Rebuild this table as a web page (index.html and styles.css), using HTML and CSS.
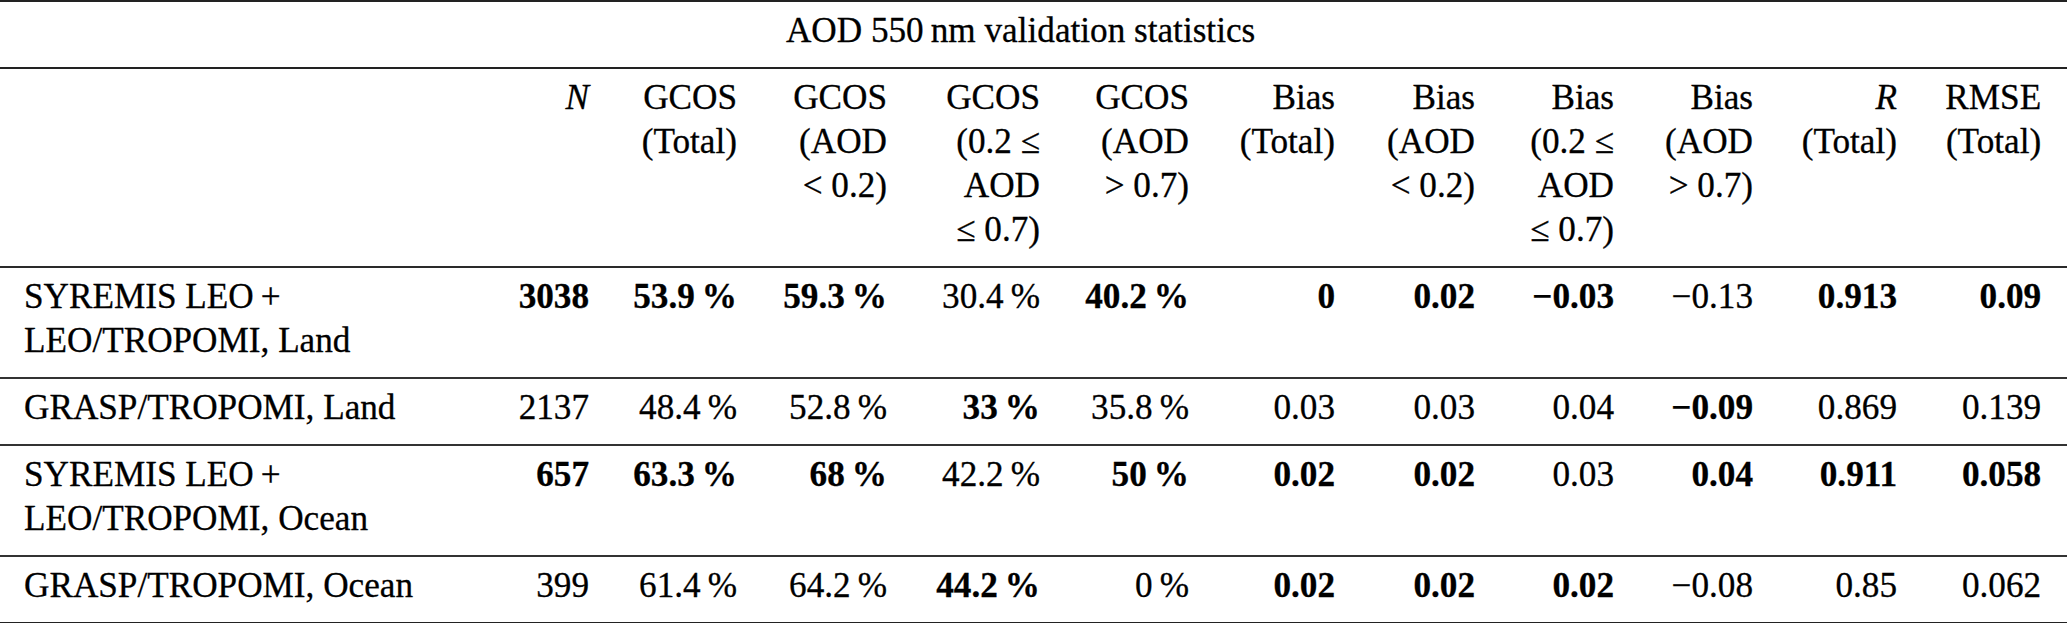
FILE: index.html
```html
<!DOCTYPE html>
<html lang="en">
<head>
<meta charset="utf-8">
<title>AOD 550 nm validation statistics</title>
<link rel="stylesheet" href="styles.css">
</head>
<body>
<table class="stats">
  <colgroup>
    <col class="w-name">
    <col class="w-n">
    <col class="w-g1">
    <col class="w-g2">
    <col class="w-g3">
    <col class="w-g4">
    <col class="w-b1">
    <col class="w-b2">
    <col class="w-b3">
    <col class="w-b4">
    <col class="w-r">
    <col class="w-rmse">
  </colgroup>
  <thead>
    <tr>
      <th class="title" colspan="12">AOD 550&thinsp;nm validation statistics</th>
    </tr>
    <tr>
      <th class="name"></th>
      <th><i>N</i></th>
      <th>GCOS<br>(Total)</th>
      <th>GCOS<br>(AOD<br>&lt; 0.2)</th>
      <th>GCOS<br>(0.2 &le;<br>AOD<br>&le; 0.7)</th>
      <th>GCOS<br>(AOD<br>&gt; 0.7)</th>
      <th>Bias<br>(Total)</th>
      <th>Bias<br>(AOD<br>&lt; 0.2)</th>
      <th>Bias<br>(0.2 &le;<br>AOD<br>&le; 0.7)</th>
      <th>Bias<br>(AOD<br>&gt; 0.7)</th>
      <th><i>R</i><br>(Total)</th>
      <th>RMSE<br>(Total)</th>
    </tr>
  </thead>
  <tbody>
    <tr>
      <td class="name">SYREMIS LEO&thinsp;+<br>LEO/TROPOMI, Land</td>
      <td><b>3038</b></td>
      <td><b>53.9&thinsp;%</b></td>
      <td><b>59.3&thinsp;%</b></td>
      <td>30.4&thinsp;%</td>
      <td><b>40.2&thinsp;%</b></td>
      <td><b>0</b></td>
      <td><b>0.02</b></td>
      <td><b>&minus;0.03</b></td>
      <td>&minus;0.13</td>
      <td><b>0.913</b></td>
      <td><b>0.09</b></td>
    </tr>
    <tr>
      <td class="name">GRASP/TROPOMI, Land</td>
      <td>2137</td>
      <td>48.4&thinsp;%</td>
      <td>52.8&thinsp;%</td>
      <td><b>33&thinsp;%</b></td>
      <td>35.8&thinsp;%</td>
      <td>0.03</td>
      <td>0.03</td>
      <td>0.04</td>
      <td><b>&minus;0.09</b></td>
      <td>0.869</td>
      <td>0.139</td>
    </tr>
    <tr>
      <td class="name">SYREMIS LEO&thinsp;+<br>LEO/TROPOMI, Ocean</td>
      <td><b>657</b></td>
      <td><b>63.3&thinsp;%</b></td>
      <td><b>68&thinsp;%</b></td>
      <td>42.2&thinsp;%</td>
      <td><b>50&thinsp;%</b></td>
      <td><b>0.02</b></td>
      <td><b>0.02</b></td>
      <td>0.03</td>
      <td><b>0.04</b></td>
      <td><b>0.911</b></td>
      <td><b>0.058</b></td>
    </tr>
    <tr>
      <td class="name">GRASP/TROPOMI, Ocean</td>
      <td>399</td>
      <td>61.4&thinsp;%</td>
      <td>64.2&thinsp;%</td>
      <td><b>44.2&thinsp;%</b></td>
      <td>0&thinsp;%</td>
      <td><b>0.02</b></td>
      <td><b>0.02</b></td>
      <td><b>0.02</b></td>
      <td>&minus;0.08</td>
      <td>0.85</td>
      <td>0.062</td>
    </tr>
  </tbody>
</table>
</body>
</html>
```

FILE: styles.css
```css
html, body {
  margin: 0;
  padding: 0;
  background: #ffffff;
}

body,
.stats,
.stats th,
.stats td {
  font-family: "Liberation Serif", "Times New Roman", serif;
  color: #000000;
}

.stats {
  width: 2067px;
  table-layout: fixed;
  border-collapse: separate;
  border-spacing: 0;
  font-size: 35.2px;
  line-height: 44px;
  -webkit-text-stroke: 0.3px #000000;
}

.w-name { width: 457px; }
.w-n { width: 145px; }
.w-g1 { width: 148px; }
.w-g2 { width: 150px; }
.w-g3 { width: 153px; }
.w-g4 { width: 149px; }
.w-b1 { width: 146px; }
.w-b2 { width: 140px; }
.w-b3 { width: 139px; }
.w-b4 { width: 139px; }
.w-r { width: 144px; }
.w-rmse { width: 157px; }

.stats th,
.stats td {
  font-weight: normal;
  text-align: right;
  vertical-align: top;
  white-space: nowrap;
  padding: 7px 13px 14px 13px;
  border-bottom: 2px solid #333333;
}

.stats tr > :last-child {
  padding-right: 26px;
}

.stats .title {
  text-align: center;
  padding-left: 0;
  padding-right: 0;
  border-top: 2px solid #222222;
  border-bottom-color: #222222;
}

.stats thead tr:last-child > * {
  border-bottom-color: #2a2a2a;
}

.stats tbody tr:last-child > * {
  border-bottom-color: #222222;
}

.stats .name {
  text-align: left;
  padding-left: 24px;
}

.stats b {
  font-weight: bold;
}

.stats i {
  font-style: italic;
}
```
